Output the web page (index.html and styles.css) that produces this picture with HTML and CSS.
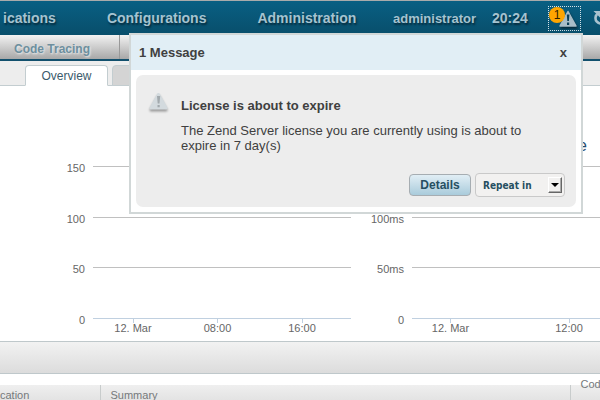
FILE: index.html
```html
<!DOCTYPE html>
<html lang="en">
<head>
<meta charset="utf-8">
<title>Overview</title>
<link rel="stylesheet" href="styles.css">
</head>
<body>
<header class="topbar">
  <nav class="mainnav">
    <a href="#">ications</a>
    <a href="#">Configurations</a>
    <a href="#">Administration</a>
  </nav>
  <a class="user" href="#">administrator</a>
  <span class="clock">20:24</span>
  <button class="alerts" type="button" aria-label="Messages">
    <svg class="alerts-icon" width="20" height="19" viewBox="0 0 20 19" aria-hidden="true">
      <path d="M10 1.500 L18 16 H2 Z" fill="#a9bdc8" stroke="#a9bdc8" stroke-width="1.5" stroke-linejoin="round"/>
      <path d="M8.800 4.500 h2.600 l-.5 6.500 h-1.600z M9 12.500 h2.200 v2.400 h-2.200z" fill="#0b3f57"/>
    </svg>
    <span class="badge">1</span>
  </button>
  <button class="refresh" type="button" aria-label="Refresh">
    <svg width="16" height="16" viewBox="0 0 16 16" aria-hidden="true">
      <path d="M5 3.5 A5.5 5.5 0 1 0 11 3.5" fill="none" stroke="#a9c2cf" stroke-width="2.6"/>
      <path d="M0.5 1 H7.500 V8 Z" fill="#a9c2cf"/>
    </svg>
  </button>
</header>
<nav class="subnav"><a href="#">Code Tracing</a></nav>
<div class="tabs">
  <button class="tab tab-active" type="button">Overview</button>
  <button class="tab tab-idle" type="button" aria-label="More"></button>
</div>
<main>
  <section class="charts">
    <div class="chart">
      <h2 class="chart-title"></h2>
      <div class="row"><span class="ylabel">150</span></div>
      <div class="row"><span class="ylabel">100</span></div>
      <div class="row"><span class="ylabel">50</span></div>
      <div class="row row-base"><span class="ylabel">0</span>
        <div class="xaxis xaxis-requests"><span>12. Mar</span><span>08:00</span><span>16:00</span></div>
      </div>
    </div>
    <div class="chart chart-wide">
      <h2 class="chart-title">e</h2>
      <div class="row"></div>
      <div class="row"><span class="ylabel">100ms</span></div>
      <div class="row"><span class="ylabel">50ms</span></div>
      <div class="row row-base"><span class="ylabel">0</span>
        <div class="xaxis xaxis-times"><span>12. Mar</span><span class="second">12:00</span></div>
      </div>
    </div>
  </section>
  <div class="toolbar"></div>
  <table class="events">
    <thead><tr><th class="col-location">cation</th><th>Summary</th><th class="col-code"><span>Cod</span></th></tr></thead>
  </table>
</main>
<section class="popup" role="dialog" aria-labelledby="popup-title">
  <header class="popup-head">
    <h2 id="popup-title">1 Message</h2>
    <button class="close" type="button">x</button>
  </header>
  <article class="message">
    <svg class="message-icon" width="24" height="24" viewBox="0 0 24 24" aria-hidden="true">
      <path d="M11.500 3.500 L19 17 H4 Z" fill="#d3dade" stroke="#d3dade" stroke-width="3" stroke-linejoin="round"/>
      <path d="M10 5 h3.200 l-.7 7.500 h-1.800z M10.500 14 h2.200 v2.200 h-2.200z" fill="#a2a9ad"/>
    </svg>
    <div class="message-body">
      <h3>License is about to expire</h3>
      <p>The Zend Server license you are currently using is about to expire in 7 day(s)</p>
    </div>
    <div class="actions">
      <button class="details" type="button">Details</button>
      <div class="repeat">
        <select aria-label="Repeat in"><option>Repeat in</option></select>
        <span class="arrow"></span>
      </div>
    </div>
  </article>
</section>
</body>
</html>
```

FILE: styles.css
```css
* { box-sizing: border-box; }
html { overflow: hidden; }
body {
  margin: 0;
  position: relative;
  background: #fff;
  color: #404040;
  font-family: "Liberation Sans", Arial, sans-serif;
  font-size: 13px;
}
h2, h3, p { margin: 0; }
button { font-family: inherit; padding: 0; border: 0; background: none; }
a { text-decoration: none; color: inherit; }

.topbar {
  display: flex;
  align-items: center;
  height: 35px;
  border-top: 1px solid #a9abab;
  background: linear-gradient(#095f83, #084e6b);
  color: #a5c3d0;
  font-weight: bold;
  text-shadow: 1px 2px 2px #06293a;
  overflow: hidden;
}
.mainnav { display: flex; flex: none; width: 393px; padding-left: 3px; gap: 51px; font-size: 14px; }
.user { flex: none; width: 99px; font-size: 13px; }
.clock { flex: none; width: 56px; font-size: 14px; }
.alerts {
  position: relative;
  flex: none;
  width: 33px;
  height: 25px;
  margin-right: 12px;
  border: 1px dotted #d5e2e8;
}
.alerts-icon { display: block; margin: 2px 0 0 9px; filter: drop-shadow(1px 2px 1px #06293a); }
.badge {
  position: absolute;
  left: 0;
  top: 0;
  width: 16px;
  height: 16px;
  border-radius: 50%;
  background: #ffa500;
  color: #302000;
  font-size: 12px;
  font-weight: normal;
  line-height: 16px;
  text-align: center;
  text-shadow: none;
}
.refresh { flex: none; height: 16px; }

.subnav {
  height: 26px;
  padding-left: 14px;
  border-bottom: 2px solid #12506d;
  background: linear-gradient(#f2f2f2, #a8a8a8);
  color: #6d8f9e;
  font-size: 12px;
  font-weight: bold;
  line-height: 28px;
  text-shadow: 1px 1px 2px #eee;
}
.subnav a { display: block; width: 106px; height: 24px; border-right: 1px solid #999; }

.tabs {
  display: flex;
  gap: 4px;
  height: 25px;
  padding: 4px 0 0 25px;
  border-bottom: 1px solid #c3cdd0;
  background: #ededed;
}
.tab { height: 21px; border: 1px solid #c3cdd0; border-radius: 4px 4px 0 0; color: #3b5a6b; font-size: 12px; }
.tab-active { width: 83px; border-bottom-color: #fff; background: #fff; }
.tab-idle { width: 83px; background: #d4d4d4; }

.charts { display: flex; height: 255px; overflow: hidden; color: #666; font-size: 11px; }
.chart { flex: none; width: 351px; padding-left: 93px; }
.chart-wide { flex: 1; width: auto; padding-left: 61px; }
.chart-title {
  height: 80px;
  padding: 50px 13px 0 0;
  color: #274b6d;
  font-size: 16px;
  font-weight: normal;
  line-height: 20px;
  text-align: right;
}
.row { height: 51px; border-top: 1px solid #c0c0c0; }
.row:nth-child(3) { height: 50px; }
.row-base { border-color: #c0d0e0; }
.ylabel { float: left; width: 60px; margin: -6px 0 0 -68px; line-height: 14px; text-align: right; }
.xaxis { display: grid; text-align: center; line-height: 10px; }
.xaxis span::before { content: ""; display: block; width: 1px; height: 4px; margin: 0 auto; background: #c0d0e0; }
.xaxis-requests { grid-template-columns: 80fr 89fr 80fr 9fr; }
.xaxis-times { grid-template-columns: 77fr 49fr 62fr; }
.second { grid-column: 3; }

.toolbar {
  height: 33px;
  border: solid #bfc8cb;
  border-width: 1px 0;
  background: linear-gradient(#f2f2f2, #dcdcdc);
}
.events {
  width: 100%;
  margin-top: 11px;
  border-collapse: collapse;
  table-layout: fixed;
  background: linear-gradient(#efefef, #dcdcdc);
  color: #75797b;
  font-size: 11px;
}
.events th { height: 24px; padding: 0 0 0 10px; font-weight: normal; line-height: 20px; text-align: left; vertical-align: top; }
.events th + th { border-left: 1px solid #c8cccc; }
.events .col-location { width: 100px; padding-left: 0; }
.col-code { width: 30px; }
.col-code span { display: block; margin-top: -11px; }

.popup {
  position: absolute;
  left: 129px;
  top: 33px;
  width: 454px;
  border: 2px solid #d1d7d7;
  background: #fff;
}
.popup-head {
  display: flex;
  align-items: center;
  justify-content: space-between;
  height: 35px;
  padding: 0 14px 0 8px;
  background: #e1eef5;
}
.popup-head h2, .message h3, .close { color: #404040; font-size: 13px; font-weight: bold; }
.message {
  display: grid;
  grid-template-columns: 33px 1fr;
  grid-template-rows: 82px auto;
  margin: 5px;
  padding: 16px 11px 10px 12px;
  border-radius: 7px;
  background: #ededed;
}
.message-icon { display: block; margin-left: -1px; filter: drop-shadow(0 2px 1px #999); }
.message-body { padding-top: 7px; }
.message h3 { margin-bottom: 10px; line-height: 15px; }
.message p { max-width: 350px; line-height: 15px; }
.actions { grid-column: 1 / 3; display: flex; align-items: center; justify-content: flex-end; gap: 4px; }
.details {
  width: 62px;
  height: 22px;
  border: 1px solid #a6adb2;
  border-radius: 4px;
  background: linear-gradient(#e1eef5, #a9cbdb);
  color: #264f61;
  font-size: 12px;
  font-weight: bold;
}
.repeat { position: relative; height: 24px; }
.repeat select {
  appearance: none;
  width: 90px;
  height: 24px;
  padding: 0 0 0 7px;
  border: 1px solid #c9c9c9;
  border-radius: 4px;
  background: #f2f1f0;
  color: #264f61;
  font: bold 10px "DejaVu Sans Condensed", "DejaVu Sans", sans-serif;
}
.arrow {
  position: absolute;
  right: 3px;
  top: 4px;
  width: 14px;
  height: 16px;
  border: 1px solid;
  border-color: #fff #666 #666 #fff;
  box-shadow: inset -1px -1px #aaa;
  background: #f2f1f0;
  pointer-events: none;
}
.arrow::after {
  content: "";
  display: block;
  margin: 5px 0 0 2px;
  width: 0;
  border: solid transparent;
  border-width: 4px 4px 0;
  border-top-color: #000;
}
```
